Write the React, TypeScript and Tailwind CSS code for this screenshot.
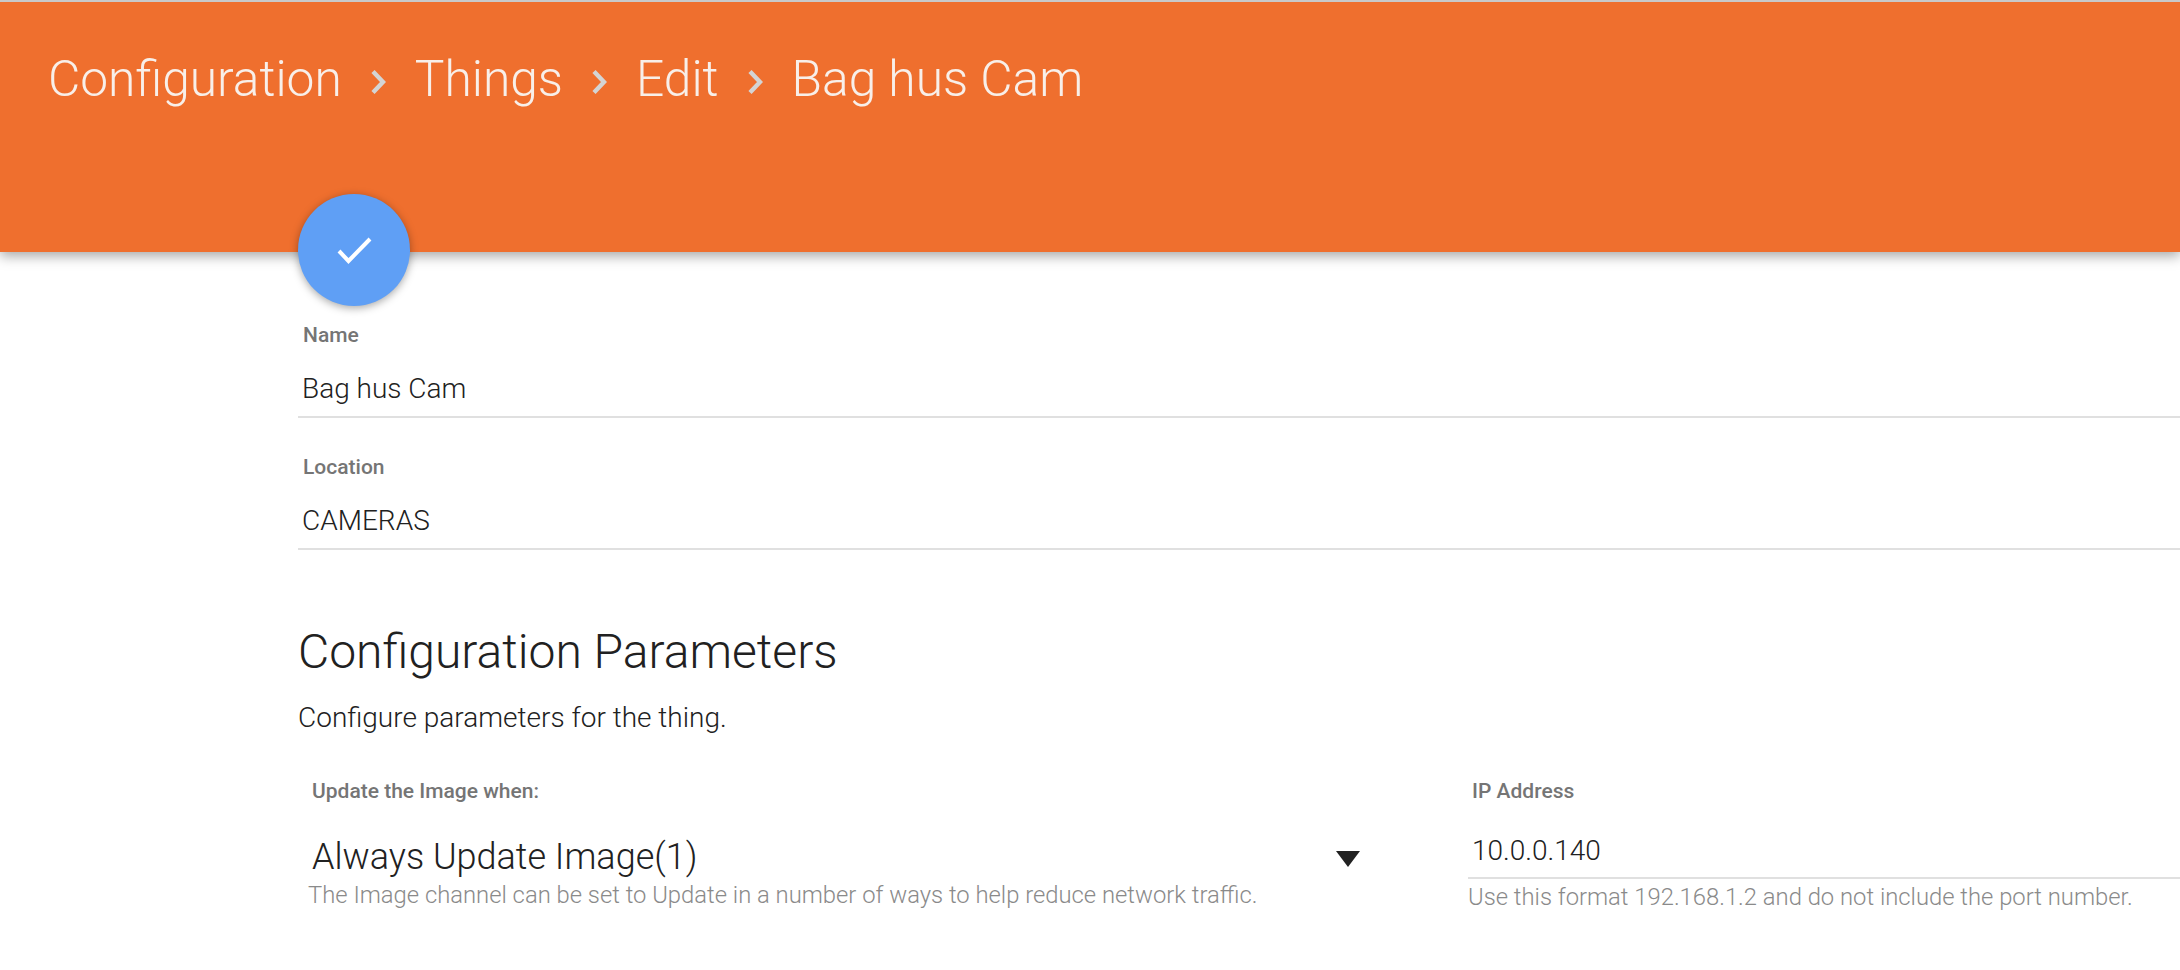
import React from 'react';

const Crumb = ({ children }: { children: React.ReactNode }) => (
  <span className="text-[49.7px] leading-[56px] font-light text-[#f8efe9]">{children}</span>
);

const Chevron = () => (
  <svg width="15" height="24" viewBox="0 0 15 24" className="ml-[29px] mr-[29px] mt-[5px] shrink-0">
    <path d="M2 1.5 L12 12 L2 22.5" fill="none" stroke="#d4d4d4" strokeWidth="4.4" />
  </svg>
);

const TextField = ({ label, value }: { label: string; value: string }) => (
  <div className="h-[132px] border-b-2 border-[#e0e0e0]">
    <div className="pl-[5px] pt-[37px] text-[21px] leading-[24px] font-medium text-[#757575]">{label}</div>
    <div className="pl-[4px] pt-[26px] text-[28px] leading-[32px] font-light text-[#212121]">{value}</div>
  </div>
);

export default function App() {
  return (
    <div className="relative h-[970px] w-[2180px] overflow-hidden bg-white font-['Roboto',sans-serif]">
      <header className="relative h-[252px] border-t-2 border-[#c9c9c9] bg-[#ef6f2e] shadow-[0_4px_12px_rgba(0,0,0,0.35)]">
        <div className="flex items-center pl-[48px] pt-[49px]">
          <Crumb>Configuration</Crumb>
          <Chevron />
          <Crumb>Things</Crumb>
          <Chevron />
          <Crumb>Edit</Crumb>
          <Chevron />
          <Crumb>Bag hus Cam</Crumb>
        </div>
      </header>

      <button className="absolute left-[298px] top-[194px] flex h-[112px] w-[112px] items-center justify-center rounded-full bg-[#5f9ff5] shadow-[0_2px_8px_rgba(0,0,0,0.35)]">
        <svg width="36" height="28" viewBox="0 0 36 28">
          <path d="M3 15 L12.5 25 L34 3" fill="none" stroke="#fff" strokeWidth="4" />
        </svg>
      </button>

      <main className="pl-[298px] pt-[34px]">
        <TextField label="Name" value="Bag hus Cam" />
        <TextField label="Location" value="CAMERAS" />

        <h2 className="pt-[74px] text-[48px] leading-[56px] font-light text-[#212121]">Configuration Parameters</h2>
        <p className="pt-[22px] text-[28px] leading-[32px] font-light text-[#212121]">Configure parameters for the thing.</p>

        <div className="flex pt-[45px]">
          <div className="w-[1170px] shrink-0">
            <div className="pl-[14px] text-[21px] leading-[24px] font-medium text-[#757575]">Update the Image when:</div>
            <div className="flex items-center justify-between pl-[14px] pr-[108px] pt-[34px]">
              <span className="text-[36px] leading-[40px] font-light text-[#212121]">Always Update Image(1)</span>
              <svg width="24" height="16" viewBox="0 0 24 16" className="mt-[3px]">
                <path d="M0 0 H24 L12 16 Z" fill="#212121" />
              </svg>
            </div>
            <div className="pl-[10px] pt-[3px] text-[23.8px] leading-[30px] font-light text-[#8a8a8a]">
              The Image channel can be set to Update in a number of ways to help reduce network traffic.
            </div>
          </div>
          <div className="flex-1">
            <div className="pl-[4px] text-[21px] leading-[24px] font-medium text-[#757575]">IP Address</div>
            <div className="border-b-2 border-[#e0e0e0] pb-[10px] pl-[4px] pt-[32px] text-[28px] leading-[32px] font-light text-[#212121]">
              10.0.0.140
            </div>
            <div className="pt-[3px] text-[23.8px] leading-[30px] font-light text-[#8a8a8a]">
              Use this format 192.168.1.2 and do not include the port number.
            </div>
          </div>
        </div>
      </main>
    </div>
  );
}
